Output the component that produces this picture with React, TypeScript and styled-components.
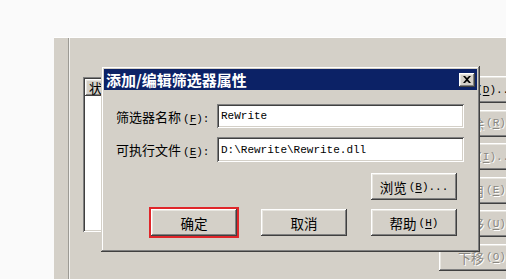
import styled, { createGlobalStyle } from "styled-components";

const GlobalStyle = createGlobalStyle`
  html, body {
    margin: 0;
    padding: 0;
    background: #fafafa;
  }
  * {
    box-sizing: border-box;
  }
`;

const cjk = `"Noto Sans CJK SC", "Noto Sans", sans-serif`;

const raised = `
  box-shadow: inset -1px -1px #404040, inset 1px 1px #ffffff,
    inset -2px -2px #808080, inset 2px 2px #e8e6e0;
`;

const sunken = `
  box-shadow: inset 1px 1px #808080, inset -1px -1px #ffffff,
    inset 2px 2px #404040, inset -2px -2px #d4d0c8;
`;

const Page = styled.div`
  width: 506px;
  height: 279px;
  padding: 37px 0 0 54px;
  background: #fafafa;
  overflow: hidden;
  display: flex;
`;

const Panel = styled.div`
  position: relative;
  flex: 1;
  display: flex;
  background: #d4d0c8;
  border-top: 1px solid #ffffff;
  overflow: hidden;
`;

const LeftStrip = styled.div`
  flex-shrink: 0;
  width: 15px;
  border-right: 1px solid #9c9a94;
  box-shadow: 1px 0 #f2f1ee;
`;

const Content = styled.div`
  flex-shrink: 0;
  display: flex;
  align-items: flex-start;
  gap: 10px;
  padding: 39px 0 0 14px;
`;

const ListBox = styled.div`
  flex-shrink: 0;
  width: 346px;
  height: 155px;
  padding: 2px;
  background: #ffffff;
  ${sunken}
`;

const ListHeader = styled.div`
  height: 17px;
  width: 120px;
  padding-left: 4px;
  background: #d4d0c8;
  font: 13px/17px ${cjk};
  color: #000;
  ${raised}
`;

const SideColumn = styled.div`
  flex-shrink: 0;
  display: flex;
  flex-direction: column;
  gap: 6.5px;
  margin-top: -1px;
`;

const SideButton = styled.div<{ $enabled?: boolean }>`
  width: 86px;
  height: 27px;
  display: flex;
  align-items: center;
  justify-content: center;
  background: #d4d0c8;
  font: 13px ${cjk};
  color: ${(p) => (p.$enabled ? "#000" : "#8a8882")};
  text-shadow: ${(p) => (p.$enabled ? "none" : "1px 1px #ffffff")};
  white-space: nowrap;
  ${raised}
`;

const Dialog = styled.div`
  position: absolute;
  left: 47px;
  top: 28px;
  width: 379px;
  height: 186px;
  padding: 3px;
  background: #d4d0c8;
  display: flex;
  flex-direction: column;
  box-shadow: inset -1px -1px #404040, inset 1px 1px #d4d0c8,
    inset -2px -2px #808080, inset 2px 2px #ffffff;
`;

const TitleBar = styled.div`
  height: 21px;
  display: flex;
  align-items: center;
  justify-content: space-between;
  padding: 0 2px;
  background: #0c2266;
`;

const Title = styled.span`
  font: bold 15px/21px ${cjk};
  color: #ffffff;
`;

const CloseButton = styled.div`
  width: 16px;
  height: 14px;
  display: flex;
  align-items: center;
  justify-content: center;
  background: #d4d0c8;
  ${raised}
`;

const Body = styled.div`
  display: flex;
  flex-direction: column;
  padding: 14px 13px 0 9px;
`;

const Form = styled.div`
  display: grid;
  grid-template-columns: 104px 247px;
  grid-template-rows: 24px 25px;
  row-gap: 9px;
  align-items: center;
`;

const Label = styled.label`
  font: 13px ${cjk};
  color: #000;
  white-space: nowrap;
  padding-left: 3px;
`;

const Key = styled.span`
  font: 11px "Liberation Mono", monospace;
  margin-left: 2px;
  u {
    text-underline-offset: 2px;
  }
`;

const Input = styled.div`
  height: 100%;
  display: flex;
  align-items: center;
  padding: 0 4px;
  background: #ffffff;
  font: 11px "Liberation Mono", monospace;
  color: #000;
  white-space: nowrap;
  ${sunken}
`;

const ButtonRow = styled.div<{ $top: number }>`
  display: flex;
  justify-content: flex-end;
  gap: 24px;
  margin-top: ${(p) => p.$top}px;
  padding-right: 7px;
`;

const Button = styled.div<{ $marked?: boolean }>`
  width: 86px;
  height: 27px;
  display: flex;
  align-items: center;
  justify-content: center;
  background: #d4d0c8;
  font: 13.5px ${cjk};
  color: #000;
  white-space: nowrap;
  ${raised}
  outline: ${(p) => (p.$marked ? "2px solid #e0262a" : "none")};
`;

const Mn = ({ k, tail = "" }: { k: string; tail?: string }) => (
  <Key>
    (<u>{k}</u>){tail}
  </Key>
);

const sideButtons = [
  { text: "添加", k: "D", tail: "...", enabled: true },
  { text: "删除", k: "R" },
  { text: "编辑", k: "I", tail: "..." },
  { text: "禁用", k: "E" },
  { text: "上移", k: "U" },
  { text: "下移", k: "O" },
];

export default function App() {
  return (
    <>
      <GlobalStyle />
      <Page>
        <Panel>
          <LeftStrip />
          <Content>
            <ListBox>
              <ListHeader>状态</ListHeader>
            </ListBox>
            <SideColumn>
              {sideButtons.map((b) => (
                <SideButton key={b.k} $enabled={b.enabled}>
                  {b.text}
                  <Mn k={b.k} tail={b.tail} />
                </SideButton>
              ))}
            </SideColumn>
          </Content>

          <Dialog>
            <TitleBar>
              <Title>添加/编辑筛选器属性</Title>
              <CloseButton>
                <svg width="8" height="7" viewBox="0 0 8 7">
                  <path
                    d="M0 0h2l2 2 2-2h2L5 3.5 8 7H6L4 5 2 7H0l3-3.5z"
                    fill="#000"
                  />
                </svg>
              </CloseButton>
            </TitleBar>
            <Body>
              <Form>
                <Label>
                  筛选器名称
                  <Mn k="F" tail=":" />
                </Label>
                <Input>ReWrite</Input>
                <Label>
                  可执行文件
                  <Mn k="E" tail=":" />
                </Label>
                <Input>D:\Rewrite\Rewrite.dll</Input>
              </Form>
              <ButtonRow $top={11}>
                <Button>
                  浏览
                  <Mn k="B" tail="..." />
                </Button>
              </ButtonRow>
              <ButtonRow $top={9}>
                <Button $marked>确定</Button>
                <Button>取消</Button>
                <Button>
                  帮助
                  <Mn k="H" />
                </Button>
              </ButtonRow>
            </Body>
          </Dialog>
        </Panel>
      </Page>
    </>
  );
}
